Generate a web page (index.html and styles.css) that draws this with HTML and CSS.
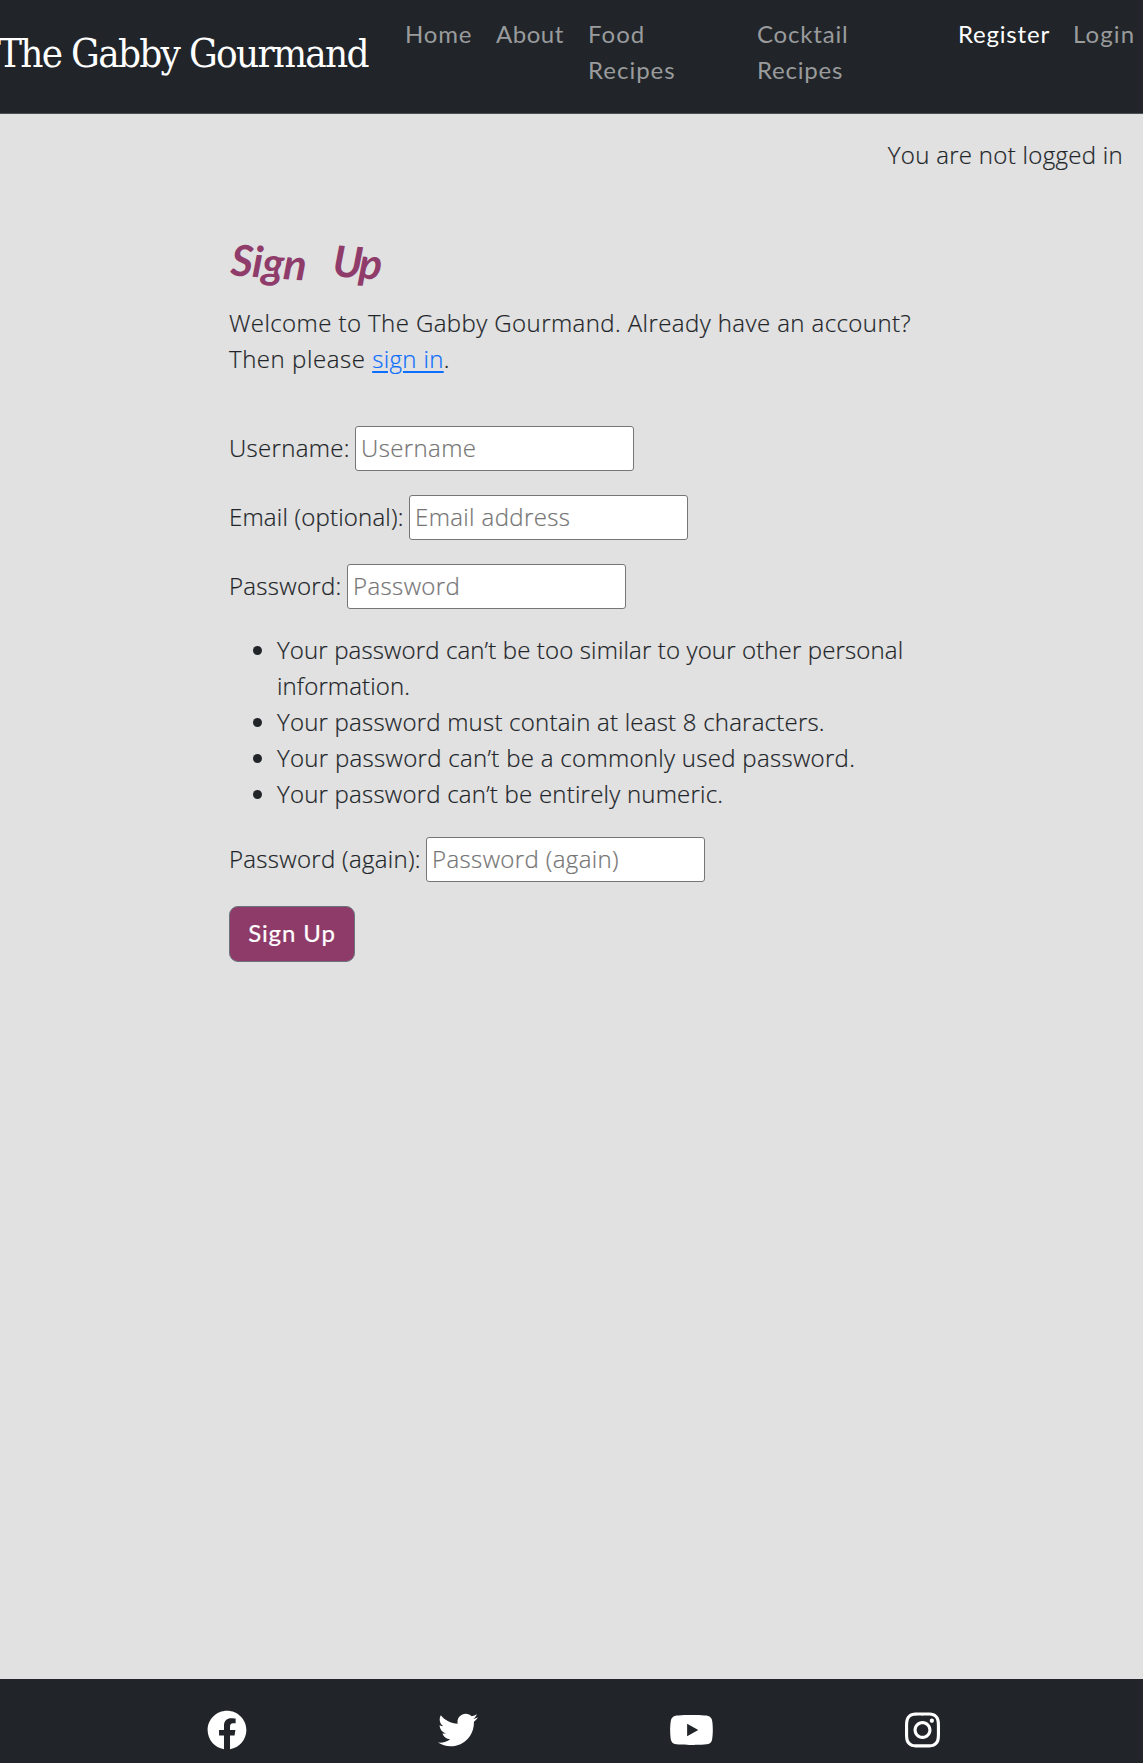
FILE: index.html
```
<!DOCTYPE html>
<html lang="en">
<head>
<meta charset="utf-8">
<title>The Gabby Gourmand</title>
<link rel="stylesheet" href="styles.css">
</head>
<body>
<header class="navbar">
  <a class="brand">The Gabby Gourmand</a>
  <nav class="links">
    <a class="link home">Home</a>
    <a class="link about">About</a>
    <a class="link food">Food Recipes</a>
    <a class="link cocktail">Cocktail Recipes</a>
    <a class="link register active">Register</a>
    <a class="link login">Login</a>
  </nav>
</header>
<p class="status">You are not logged in</p>
<main class="content">
  <h1 class="title"><span class="word sign">Sign</span><span class="word up">Up</span></h1>
  <p class="intro">Welcome to The Gabby Gourmand. Already have an account?<br><span class="then">Then please <a class="signin">sign in</a>.</span></p>
  <form class="form">
    <div class="field"><label class="l-user" for="u">Username:</label><input id="u" class="input" type="text" placeholder="Username"></div>
    <div class="field"><label class="l-email" for="e">Email (optional):</label><input id="e" class="input" type="email" placeholder="Email address"></div>
    <div class="field"><label class="l-pass" for="p">Password:</label><input id="p" class="input" type="password" placeholder="Password"></div>
    <ul class="rules">
      <li class="similar">Your password can’t be too similar to your other personal information.</li>
      <li>Your password must contain at least 8 characters.</li>
      <li class="common">Your password can’t be a commonly used password.</li>
      <li>Your password can’t be entirely numeric.</li>
    </ul>
    <div class="field"><label class="l-again" for="p2">Password (again):</label><input id="p2" class="input" type="password" placeholder="Password (again)"></div>
    <button class="button" type="button">Sign Up</button>
  </form>
</main>
<footer class="footer">
  <svg class="icon" viewBox="0 0 512 512"><path d="M504 256C504 119 393 8 256 8S8 119 8 256c0 123.78 90.69 226.38 209.25 245V327.69h-63V256h63v-54.64c0-62.15 37-96.48 93.67-96.48 27.14 0 55.52 4.84 55.52 4.84v61h-31.28c-30.8 0-40.41 19.12-40.41 38.73V256h68.78l-11 71.69h-57.78V501C413.31 482.38 504 379.78 504 256z"/></svg>
  <svg class="icon" viewBox="0 0 512 512"><path d="M459.37 151.716c.325 4.548.325 9.097.325 13.645 0 138.72-105.583 298.558-298.558 298.558-59.452 0-114.68-17.219-161.137-47.106 8.447.974 16.568 1.299 25.34 1.299 49.055 0 94.213-16.568 130.274-44.832-46.132-.975-84.792-31.188-98.112-72.772 6.498.974 12.995 1.624 19.818 1.624 9.421 0 18.843-1.3 27.614-3.573-48.081-9.747-84.143-51.98-84.143-102.985v-1.299c13.969 7.797 30.214 12.67 47.431 13.319-28.264-18.843-46.781-51.005-46.781-87.391 0-19.492 5.197-37.36 14.294-52.954 51.655 63.675 129.3 105.258 216.365 109.807-1.624-7.797-2.599-15.918-2.599-24.04 0-57.828 46.782-104.934 104.934-104.934 30.213 0 57.502 12.67 76.67 33.137 23.715-4.548 46.456-13.32 66.599-25.34-7.798 24.366-24.366 44.833-46.132 57.827 21.117-2.273 41.584-8.122 60.426-16.243-14.292 20.791-32.161 39.308-52.628 54.253z"/></svg>
  <svg class="icon wide" viewBox="0 0 576 512"><path d="M549.655 124.083c-6.281-23.65-24.787-42.276-48.284-48.597C458.781 64 288 64 288 64S117.22 64 74.629 75.486c-23.497 6.322-42.003 24.947-48.284 48.597-11.412 42.867-11.412 132.305-11.412 132.305s0 89.438 11.412 132.305c6.281 23.65 24.787 41.5 48.284 47.821C117.22 448 288 448 288 448s170.78 0 213.371-11.486c23.497-6.321 42.003-24.171 48.284-47.821 11.412-42.867 11.412-132.305 11.412-132.305s0-89.438-11.412-132.305zM232 337.591V175.185l142.739 81.205L232 337.591z"/></svg>
  <svg class="icon narrow" viewBox="0 0 448 512"><path d="M224.1 141c-63.6 0-114.9 51.3-114.9 114.9s51.3 114.9 114.9 114.9S339 319.5 339 255.900 287.700 141 224.100 141zm0 189.600c-41.100 0-74.700-33.500-74.700-74.700s33.500-74.700 74.700-74.700 74.700 33.500 74.700 74.700-33.600 74.700-74.700 74.700zm146.400-194.300c0 14.900-12 26.800-26.800 26.800-14.900 0-26.800-12-26.800-26.800s12-26.800 26.800-26.800 26.800 12 26.800 26.800zm76.100 27.200c-1.700-35.900-9.900-67.700-36.200-93.900-26.200-26.200-58-34.400-93.900-36.200-37-2.100-147.900-2.100-184.900 0-35.800 1.700-67.600 9.900-93.900 36.100s-34.400 58-36.200 93.900c-2.100 37-2.100 147.900 0 184.900 1.700 35.900 9.900 67.700 36.200 93.900s58 34.400 93.900 36.200c37 2.100 147.900 2.100 184.900 0 35.900-1.700 67.700-9.900 93.900-36.200 26.200-26.200 34.400-58 36.200-93.900 2.100-37 2.100-147.800 0-184.800zM398.800 388c-7.800 19.600-22.900 34.700-42.600 42.600-29.500 11.700-99.500 9-132.100 9s-102.700 2.600-132.100-9c-19.600-7.800-34.700-22.900-42.600-42.600-11.700-29.500-9-99.500-9-132.100s-2.600-102.700 9-132.100c7.800-19.600 22.900-34.700 42.600-42.600 29.500-11.700 99.500-9 132.100-9s102.700-2.600 132.100 9c19.600 7.800 34.700 22.900 42.600 42.600 11.700 29.500 9 99.500 9 132.100s2.700 102.700-9 132.100z"/></svg>
</footer>
</body>
</html>
```
FILE: styles.css
```
* { box-sizing: border-box; }
body {
  margin: 0;
  height: 1763px;
  display: flex;
  flex-direction: column;
  overflow: hidden;
  background: #e1e1e1;
  color: #212529;
  font: 300 24px/36px "Open Sans", Lato, sans-serif;
  letter-spacing: 0.3px;
}
p, h1, ul { margin: 0; }
.status, .intro, .form { -webkit-text-stroke: 0.2px; }
.navbar {
  flex: none;
  height: 114px;
  display: flex;
  background: #212529;
  border-bottom: 1px solid #4d5154;
}
.brand {
  width: 405px;
  margin-left: -2px;
  padding-top: 23px;
  color: #fff;
  font: 400 40px/60px "DejaVu Serif Condensed", "DejaVu Serif", serif;
  letter-spacing: -1.7px;
  white-space: nowrap;
}
.links { display: flex; margin-left: 2px; padding-top: 16px; }
.link { flex: none; color: #999b9d; font-family: Lato, sans-serif; font-weight: 400; letter-spacing: 0.8px; }
.home { width: 91px; }
.about { width: 92px; letter-spacing: 0.5px; }
.food { width: 169px; padding-right: 65px; letter-spacing: 1px; }
.cocktail { width: 201px; padding-right: 95px; }
.register { width: 115px; }
.login { letter-spacing: 1.1px; }
.active { color: #fff; }
.status { align-self: flex-end; padding: 23px 20px 0 0; }
.content { flex: 1; padding-left: 229px; }
.title {
  display: flex;
  gap: 26px;
  height: 132px;
  padding: 63px 0 0 2px;
  color: #903c6b;
  font: italic 700 43px/52px Lato, sans-serif;
  letter-spacing: -0.5px;
}
.word { display: block; height: 52px; }
.sign { transform: rotate(4deg); }
.up { transform: rotate(4deg); letter-spacing: -3px; }
.intro { letter-spacing: 0.42px; }
.then { letter-spacing: 0.55px; }
.signin { color: #0d6efd; letter-spacing: 0.35px; text-decoration: underline; text-decoration-thickness: 2px; text-underline-offset: 3px; }
.form { padding-top: 49px; }
.field { display: flex; align-items: center; height: 45px; margin-bottom: 24px; white-space: nowrap; }
.field label { padding-bottom: 2px; }
.l-user { width: 126px; }
.l-email { width: 180px; letter-spacing: 0.2px; }
.l-pass { width: 118px; }
.l-again { width: 197px; }
.input {
  width: 279px;
  height: 45px;
  padding: 0 5px 2px;
  border: 1px solid #767676;
  border-radius: 3px;
  background: #fff;
  font: inherit;
  letter-spacing: 0.38px;
}
.input::placeholder { color: #757575; opacity: 1; }
.rules { width: 685px; padding-left: 48px; margin: -1px 0 25px; letter-spacing: 0.22px; }
.similar { letter-spacing: 0.13px; }
.common { letter-spacing: 0.3px; }
.button {
  display: block;
  width: 126px;
  height: 56px;
  padding: 0 0 2px;
  border: 1px solid #6c757d;
  border-radius: 9px;
  background: #8f3b6a;
  color: #fff;
  font: 400 24px/36px Lato, sans-serif;
  letter-spacing: 0.9px;
}
.footer {
  flex: none;
  height: 84px;
  display: flex;
  justify-content: center;
  gap: 191px;
  padding: 30.5px 0 0 4px;
  background: #212529;
}
.icon { flex: none; width: 40px; height: 40px; fill: #fff; }
.wide { width: 45px; }
.narrow { width: 35px; }
```
